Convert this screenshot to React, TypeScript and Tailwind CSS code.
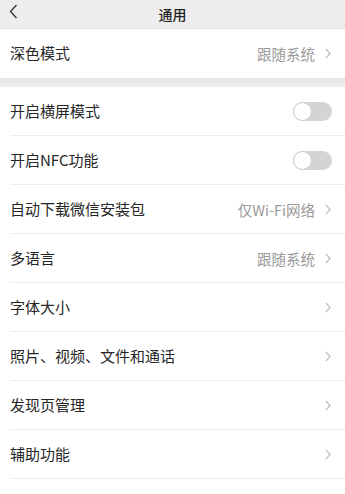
import React from "react";

const font = { fontFamily: '"Noto Sans CJK SC", "Noto Sans", sans-serif' };

function Chevron() {
  return (
    <svg width="6" height="11" viewBox="0 0 6 11" className="ml-[10px]">
      <path d="M0.8 0.8 L5.2 5.5 L0.8 10.2" fill="none" stroke="#b8b8b8" strokeWidth="1.1" />
    </svg>
  );
}

function Toggle() {
  return (
    <div className="relative h-[19px] w-[39px] rounded-full bg-[#d4d4d4]">
      <div className="absolute left-0 top-0 h-[19px] w-[19px] rounded-full border border-[#cfcfcf] bg-white" />
    </div>
  );
}

function Row({ label, value, toggle, divider = true }: { label: string; value?: string; toggle?: boolean; divider?: boolean }) {
  return (
    <div className="relative flex h-[49px] items-center bg-white pl-[10px] pr-[14px]">
      <span className="flex-1 text-[15px] text-[#262626]">{label}</span>
      {toggle ? (
        <div className="mr-[-1px]">
          <Toggle />
        </div>
      ) : (
        <div className="flex items-center">
          {value && <span className="text-[14.5px] text-[#9a9a9a]">{value}</span>}
          <Chevron />
        </div>
      )}
      {divider && <div className="absolute bottom-0 left-[10px] right-0 h-px bg-[#ececec]" />}
    </div>
  );
}

export default function App() {
  return (
    <div className="h-[494px] w-[345px] overflow-hidden bg-white" style={font}>
      <div className="relative flex h-[29px] items-center justify-center border-b border-[#e2e2e2] bg-[#ededed]">
        <svg width="9" height="15" viewBox="0 0 9 15" className="absolute left-[9px] top-[4px]">
          <path d="M7.5 1 L1.5 7.5 L7.5 14" fill="none" stroke="#333" strokeWidth="1.3" />
        </svg>
        <span className="text-[14px] font-medium text-[#1f1f1f]">通用</span>
      </div>
      <Row label="深色模式" value="跟随系统" divider={false} />
      <div className="h-[9px] bg-gradient-to-b from-[#e6e6e6] to-[#efefef]" />
      <Row label="开启横屏模式" toggle />
      <Row label="开启NFC功能" toggle />
      <Row label="自动下载微信安装包" value="仅Wi-Fi网络" />
      <Row label="多语言" value="跟随系统" />
      <Row label="字体大小" />
      <Row label="照片、视频、文件和通话" />
      <Row label="发现页管理" />
      <Row label="辅助功能" />
    </div>
  );
}
